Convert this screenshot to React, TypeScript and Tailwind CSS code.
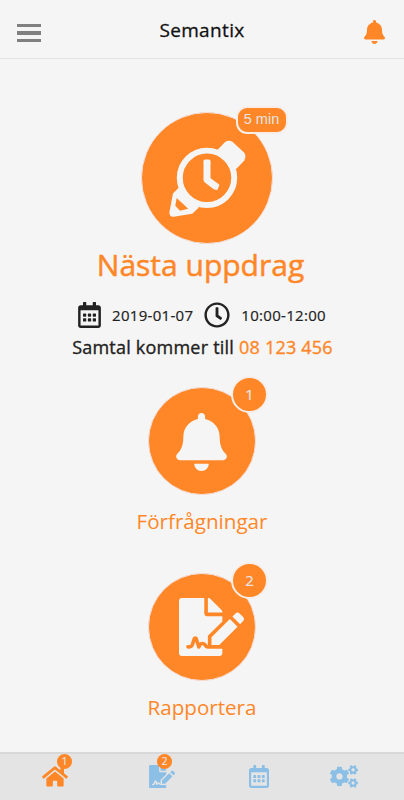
import React from "react";
import {
  FaBell,
  FaCogs,
  FaFileSignature,
  FaHome,
  FaRegCalendarAlt,
  FaRegClock,
} from "react-icons/fa";

// Wrist watch shaped like a pencil
function WatchPencilIcon() {
  return (
    <svg viewBox="112 132 238 238" className="w-[79px] h-[79px] mt-px ml-px" fill="#f5f5f5">
      <path d="M260 166 L284 141 Q296 133 307 141 L341 173 Q349 184 342 197 L316 224 Z" />
      <path
        fillRule="evenodd"
        d="M144 279 L127 296 L116 354 Q117 367 129 366 L185 357 L205 338 Z M138 310 L134 333 L148 348 L173 342 Z"
      />
      <circle cx="229.5" cy="249" r="82" fill="#ff8727" stroke="#f5f5f5" strokeWidth="18" />
      <path
        d="M229.5 205 V255 L257 276"
        fill="none"
        stroke="#f5f5f5"
        strokeWidth="21"
        strokeLinejoin="round"
      />
      <path d="M219 207 V199 Q219 194 224 194 H235 Q240 194 240 199 V207 Z" />
      <path d="M251 284 L261 286 L267 270 L258 264 Z" />
    </svg>
  );
}

function Badge({ label, className }: { label: string; className: string }) {
  return (
    <span
      className={`absolute flex items-center justify-center bg-[#ff8727] text-[#e4e4e4] ${className}`}
    >
      {label}
    </span>
  );
}

type TileProps = {
  label: string;
  count: string;
  labelClass: string;
  children: React.ReactNode;
};

function Tile({ label, count, labelClass, children }: TileProps) {
  return (
    <button className="flex flex-col items-center">
      <span className="relative flex items-center justify-center w-[108px] h-[108px] rounded-full bg-[#ff8727] border border-[#f3e0dc] text-[#f5f5f5]">
        {children}
        <Badge
          label={count}
          className="-top-[12px] -right-[13px] w-[37px] h-[37px] rounded-full border-2 border-[#f7eeea] text-[15px] font-['Open_Sans',sans-serif] [-webkit-text-stroke:0.2px]"
        />
      </span>
      <span className={`mt-[10px] leading-8 text-[#ff8727] whitespace-nowrap ${labelClass}`}>
        {label}
      </span>
    </button>
  );
}

const tabs = [
  { icon: <FaHome className="w-[26px] h-[23px]" />, color: "text-[#ff8727]", count: "1", pad: "pl-[42px] w-[146px]", badge: "left-[15px]" },
  { icon: <FaFileSignature className="w-[26px] h-[23px]" />, color: "text-[#8cbfe6]", count: "2", pad: "pl-[3px] w-[103px]", badge: "left-[8px]" },
  { icon: <FaRegCalendarAlt className="w-[20px] h-[23px]" />, color: "text-[#8cbfe6]", count: "", pad: "w-[81px]", badge: "" },
  { icon: <FaCogs className="w-[28px] h-[23px]" />, color: "text-[#8cbfe6]", count: "", pad: "w-[74px]", badge: "" },
];

export default function App() {
  return (
    <div className="flex flex-col w-[404px] h-[800px] overflow-hidden bg-[#f5f5f5] font-['Open_Sans','Noto_Sans',sans-serif]">
      <header className="flex items-center justify-between h-[59px] pl-[17px] pr-[19px] pt-1 border-b border-[#e3e3e3]">
        <button className="flex flex-col gap-1 w-6 mt-[4px]">
          <span className="h-[3.5px] bg-[#808080]" />
          <span className="h-[3.5px] bg-[#808080]" />
          <span className="h-[3.5px] bg-[#808080]" />
        </button>
        <h1 className="text-[19px] -ml-px -mt-px tracking-[0.35px] text-[#111] [-webkit-text-stroke:0.3px]">
          Semantix
        </h1>
        <FaBell className="w-[21px] h-6 mt-0.5 text-[#ff8727]" />
      </header>

      <main className="flex flex-col items-center flex-1 pt-[53px]">
        <div className="relative flex items-center justify-center w-[132px] h-[132px] ml-[9px] rounded-full bg-[#ff8727] border border-[#f3e0dc]">
          <WatchPencilIcon />
          <Badge
            label="5 min"
            className="-top-[7px] -right-[16px] w-[52px] h-[28px] rounded-[11px] border-2 border-[#f7eeea] text-[14.5px] font-['Liberation_Sans',sans-serif]"
          />
        </div>
        <h2 className="mt-px mr-[3px] text-[30px] leading-10 text-[#ff8727] [-webkit-text-stroke:0.5px]">
          Nästa uppdrag
        </h2>

        <div className="flex items-center mt-4 h-[28px] text-[15px] tracking-[0.3px] text-[#222] [-webkit-text-stroke:0.2px]">
          <FaRegCalendarAlt className="w-[23px] h-[26px]" />
          <span className="ml-[11px]">2019-01-07</span>
          <FaRegClock className="w-[26px] h-[26px] ml-[11px]" />
          <span className="ml-[11px]">10:00-12:00</span>
        </div>
        <p className="mt-[6px] ml-px text-[18px] leading-6 tracking-[0.22px] text-[#222] [-webkit-text-stroke:0.35px]">
          Samtal kommer till <span className="text-[#ff8727]">08 123 456</span>
        </p>

        <div className="flex flex-col items-center gap-[36px] mt-[28px]">
          <Tile label="Förfrågningar" count="1" labelClass="text-[20.6px]">
            <FaBell className="w-[51px] h-[58px] mr-[2px] mt-px" />
          </Tile>
          <Tile label="Rapportera" count="2" labelClass="text-[20.6px]">
            <FaFileSignature className="w-[65px] h-[58px] ml-[20px]" />
          </Tile>
        </div>
      </main>

      <nav className="flex h-[48px] pt-[11px] bg-[#e4e4e4] border-t-2 border-[#d8d8d8]">
        {tabs.map((tab, i) => (
          <button key={i} className={`flex items-start ${tab.pad} ${tab.color}`}>
            <span className="relative">
              {tab.icon}
              {tab.count && (
                <Badge
                  label={tab.count}
                  className={`-top-[11px] w-[15px] h-[15px] rounded-full text-[10px] [-webkit-text-stroke:0.2px] ${tab.badge}`}
                />
              )}
            </span>
          </button>
        ))}
      </nav>
    </div>
  );
}
